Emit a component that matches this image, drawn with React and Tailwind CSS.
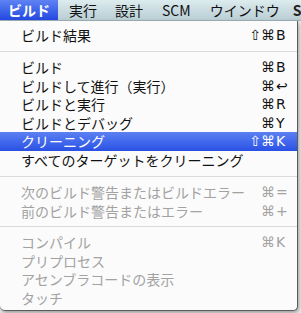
const JP = { fontFamily: '"Noto Sans CJK JP", "Noto Sans", sans-serif' };

const SECTIONS = [
  [{ label: 'ビルド結果', mods: '⇧⌘', key: 'B' }],
  [
    { label: 'ビルド', mods: '⌘', key: 'B' },
    { label: 'ビルドして進行（実行）', mods: '⌘', key: '↩' },
    { label: 'ビルドと実行', mods: '⌘', key: 'R' },
    { label: 'ビルドとデバッグ', mods: '⌘', key: 'Y' },
    { label: 'クリーニング', mods: '⇧⌘', key: 'K', active: true },
    { label: 'すべてのターゲットをクリーニング' },
  ],
  [
    { label: '次のビルド警告またはビルドエラー', mods: '⌘', key: '=', disabled: true },
    { label: '前のビルド警告またはエラー', mods: '⌘', key: '+', disabled: true },
  ],
  [
    { label: 'コンパイル', mods: '⌘', key: 'K', disabled: true },
    { label: 'プリプロセス', disabled: true },
    { label: 'アセンブラコードの表示', disabled: true },
    { label: 'タッチ', disabled: true },
  ],
];

function MenuRow({ item }) {
  const color = item.active
    ? 'text-white bg-gradient-to-b from-[#5c80f2] to-[#2a50e4]'
    : item.disabled
    ? 'text-[#a2a2a2]'
    : 'text-[#111]';
  return (
    <div className={`h-[18.5px] flex items-center pl-[21px] pr-[9px] text-[14px] leading-none ${color}`}>
      <span className="flex-1 whitespace-nowrap" style={JP}>{item.label}</span>
      {item.key && (
        <span className="flex items-center font-['DejaVu_Sans',sans-serif] text-[14px]">
          <span className="text-right">{item.mods}</span>
          <span className="w-[13px] pl-[1px]">{item.key}</span>
        </span>
      )}
    </div>
  );
}

export default function App() {
  return (
    <div className="w-[301px] h-[313px] bg-[#ececec] overflow-hidden relative">
      {/* menu bar */}
      <div
        className="h-[21px] flex items-center whitespace-nowrap overflow-hidden text-[14px] leading-none bg-gradient-to-b from-[#dcebee] to-[#b9ced4] border-b border-[#9fb2b8] text-[#111]"
        style={JP}
      >
        <div className="h-full shrink-0 flex items-center px-[8px] w-[58px] font-bold text-white bg-gradient-to-b from-[#5f82f3] to-[#2447e0]">
          ビルド
        </div>
        <span className="shrink-0 ml-[11px]">実行</span>
        <span className="shrink-0 ml-[18px]">設計</span>
        <span className="shrink-0 ml-[19px]">SCM</span>
        <span className="shrink-0 ml-[19px]">ウインドウ</span>
        <span className="shrink-0 ml-[13px] font-bold text-[#222]">S</span>
      </div>

      {/* dropdown */}
      <div className="w-[298px] h-[290px] bg-[#fbfbfb] rounded-b-[5px] border-r border-b border-[#5a5a5a] shadow-[1px_2px_4px_rgba(0,0,0,0.35)] pt-[4.5px]">
        {SECTIONS.map((sec, i) => (
          <div key={i}>
            {i > 0 && (
              <div className={`flex items-center ${i === 3 ? 'h-[13px]' : 'h-[14px]'}`}>
                <div className="w-full h-px bg-[#dadada]" />
              </div>
            )}
            {sec.map((item) => (
              <MenuRow key={item.label} item={item} />
            ))}
          </div>
        ))}
      </div>
    </div>
  );
}
